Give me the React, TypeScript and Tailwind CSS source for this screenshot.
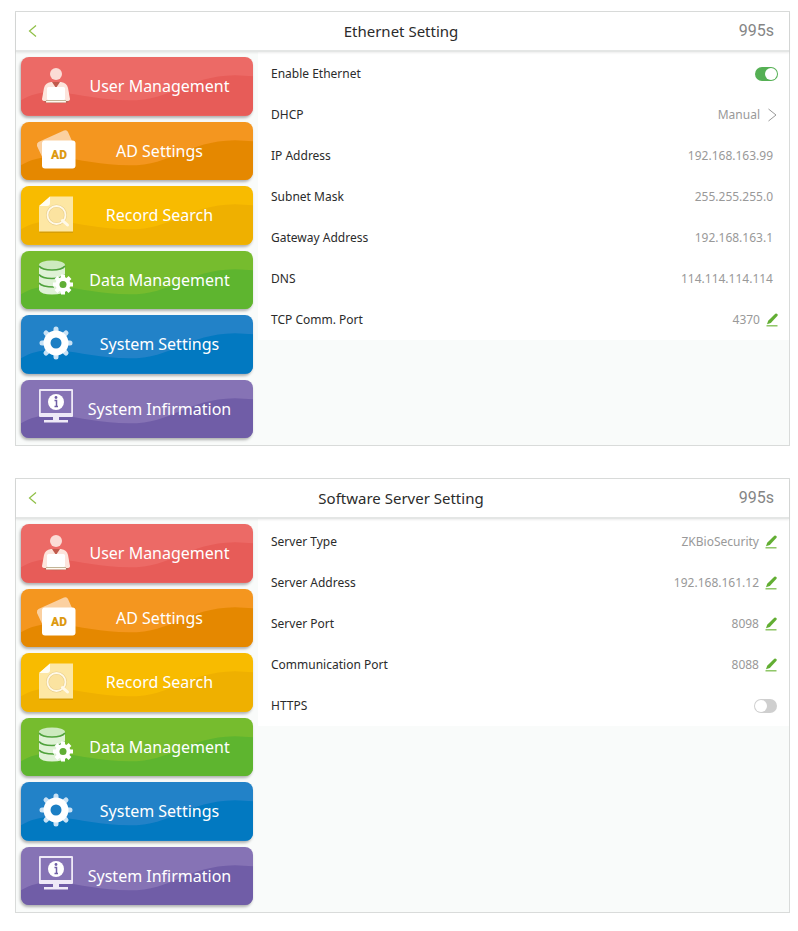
import React, { useState } from "react";

type MenuItem = {
  label: string;
  top: string;
  wave: string;
  icon: React.ReactNode;
};

const UserIcon = () => (
  <svg width="40" height="40" viewBox="0 0 40 40" aria-hidden="true">
    <path d="M7 34 H33 L32 37.500 Q20 39 9 37.500 Z" fill="#a8705a" opacity="0.75" />
    <path d="M6 34 L8 23 Q9 18 15 17 H25 Q31 18 32 23 L34 34 Q34 36 31 36 H9 Q6 36 6 34 Z" fill="#fde4dc" />
    <path d="M16 17 H24 L20 23 Z" fill="#c05a4c" />
    <circle cx="20" cy="9" r="6" fill="#fbdcd6" />
    <rect x="11" y="22" width="18" height="13" rx="1.500" fill="#fff" />
    <path d="M10 35.500 H30" stroke="#a8a17a" strokeWidth="0.700" />
    <rect x="10" y="36" width="20" height="1.500" rx="0.500" fill="#fffaf0" />
  </svg>
);

const AdIcon = () => (
  <svg width="40" height="40" viewBox="0 0 40 40" aria-hidden="true">
    <path d="M2.500 13 L28 1.500 Q31 0.500 32 3 L36 12 L8 32 L1 17 Q0.500 14 2.500 13Z" fill="#fbd0a0" />
    <rect x="6" y="11.500" width="33.500" height="28" rx="3" fill="#fff" />
    <text x="23" y="30" textAnchor="middle" fontSize="12" fontWeight="900" fontFamily="Roboto, sans-serif" fill="#dd9a12">AD</text>
  </svg>
);

const RecordIcon = () => (
  <svg width="40" height="40" viewBox="0 0 40 40" aria-hidden="true">
    <path d="M3.500 38 H37" stroke="#b98a10" strokeWidth="1.500" opacity="0.6" />
    <path d="M14 2.500 H37 V37.500 H3 V12.500 Z" fill="#fde7a4" />
    <path d="M14 2.500 V9 Q14 12 11 12 H3 Z" fill="#fffdf2" />
    <circle cx="20.500" cy="21" r="9" fill="#fbe3a0" stroke="#e9cf8c" strokeWidth="3" />
    <circle cx="20.500" cy="21" r="9" fill="none" stroke="#fff9e8" strokeWidth="1.800" />
    <path d="M26.500 26.500 L31.500 31" stroke="#fff9e8" strokeWidth="3" strokeLinecap="round" />
  </svg>
);

const DataIcon = () => (
  <svg width="40" height="40" viewBox="0 0 40 40" aria-hidden="true">
    <path d="M3 7 V32 Q5 36.500 16 36.500 Q28 36.500 29 32 V7 Z" fill="#dff2d6" />
    <ellipse cx="16" cy="7" rx="13" ry="4.500" fill="#cdeabf" />
    <g fill="none" stroke="#4fa23c" strokeWidth="1.500">
      <path d="M3 8 Q6 12 16 12 Q26 12 29 8" />
      <path d="M3 16.500 Q6 20.500 16 20.500 Q26 20.500 29 16.500" />
      <path d="M3 25 Q6 29 18 29" />
    </g>
    <g stroke="#fff" strokeWidth="4">
      <path d="M27 16.500 V36.500 M17 26.500 H37 M20 19.500 L34 33.500 M34 19.500 L20 33.500" />
    </g>
    <circle cx="27" cy="26.500" r="7.500" fill="#fff" />
    <circle cx="27" cy="26.500" r="3.500" fill="#5fae35" />
  </svg>
);

const GearIcon = () => (
  <svg width="40" height="40" viewBox="0 0 40 40" aria-hidden="true">
    <g stroke="#c9e2f5" strokeWidth="5" strokeLinecap="round">
      <path d="M20 6 V34 M6 20 H34 M10 10 L30 30 M30 10 L10 30" />
    </g>
    <circle cx="20" cy="20" r="12.500" fill="#fff" />
    <circle cx="20" cy="20" r="5.500" fill="#1c7fc4" />
  </svg>
);

const MonitorIcon = () => (
  <svg width="40" height="40" viewBox="0 0 40 40" aria-hidden="true">
    <path fillRule="evenodd" d="M4 2 H36 Q37 2 37 3 V29 Q37 30 36 30 H4 Q3 30 3 29 V3 Q3 2 4 2 Z M4.800 4 V26 H35.200 V4 Z" fill="#eee9f7" />
    <path d="M17 30 H23 V33 H32 V35.500 H8 V33 H17 Z" fill="#eee9f7" />
    <circle cx="20" cy="15" r="8" fill="#fff" />
    <circle cx="20" cy="10.500" r="1.400" fill="#6f5fa6" />
    <path d="M18.500 13.500 H20.500 V19.500 M18.500 19.500 H22" fill="none" stroke="#6f5fa6" strokeWidth="1.500" />
  </svg>
);

const menu: MenuItem[] = [
  { label: "User Management", top: "bg-[#ec6a66]", wave: "#e75c58", icon: <UserIcon /> },
  { label: "AD Settings", top: "bg-[#f4961f]", wave: "#e58800", icon: <AdIcon /> },
  { label: "Record Search", top: "bg-[#f8bb00]", wave: "#efb000", icon: <RecordIcon /> },
  { label: "Data Management", top: "bg-[#76bc2e]", wave: "#5eb52f", icon: <DataIcon /> },
  { label: "System Settings", top: "bg-[#2282c8]", wave: "#0279c1", icon: <GearIcon /> },
  { label: "System Infirmation", top: "bg-[#8673b5]", wave: "#705da7", icon: <MonitorIcon /> },
];

function Sidebar() {
  return (
    <nav aria-label="Main menu" className="grid w-[232px] shrink-0 grid-rows-6 gap-[6px]">
      {menu.map((item) => (
        <button
          key={item.label}
          type="button"
          className={`relative flex items-center overflow-hidden rounded-lg pr-[10px] pl-[15px] text-white shadow-[-1px_2px_3px_rgba(0,0,0,0.3)] ${item.top}`}
        >
          <svg className="absolute inset-0 size-full" viewBox="0 0 232 58" preserveAspectRatio="none" aria-hidden="true">
            <path d="M0 43 C10 37 22 34 36 35 C60 37 80 43 108 43 C152 43 165 19 214 18 L232 19 V58 H0 Z" fill={item.wave} />
          </svg>
          <span className="relative shrink-0 pb-[3px]">{item.icon}</span>
          <span className="relative flex-1 text-center text-base whitespace-nowrap">{item.label}</span>
        </button>
      ))}
    </nav>
  );
}

function Panel({ title, children }: { title: string; children: React.ReactNode }) {
  return (
    <section className="flex min-h-[435px] flex-col border border-[#d9dbda] bg-[#f9fbfa]">
      <header className="relative grid h-10 grid-cols-[1fr_auto_1fr] items-center border-b-2 border-[#e4e6e5] bg-white pr-[15px] pl-3 shadow-[0_1px_2px_rgba(0,0,0,0.08)]">
        <button type="button" aria-label="Back" className="w-fit text-[#8fbf45]">
          <svg width="10" height="14" viewBox="0 0 10 14" fill="none" stroke="currentColor" strokeWidth="1.200" aria-hidden="true">
            <path d="M8 1.500 L1.500 7 L8 12.500" />
          </svg>
        </button>
        <h1 className="text-[15px] text-[#2b2b2b]">{title}</h1>
        <span className="text-right font-[Roboto,sans-serif] text-base text-[#858585]">995s</span>
      </header>
      <div className="flex flex-1">
        <div className="flex px-[5px] pt-[5px] pb-[7px]">
          <Sidebar />
        </div>
        <div className="min-w-0 flex-1">{children}</div>
      </div>
    </section>
  );
}

function Row({ label, htmlFor, children }: { label: string; htmlFor?: string; children: React.ReactNode }) {
  return (
    <div className="flex h-[41px] items-center justify-between text-xs">
      {htmlFor ? (
        <label htmlFor={htmlFor} className="text-[#2b2b2b]">{label}</label>
      ) : (
        <span className="text-[#2b2b2b]">{label}</span>
      )}
      <div className="flex items-center gap-[6px] text-[#999]">{children}</div>
    </div>
  );
}

function Edit({ label }: { label: string }) {
  return (
    <button type="button" aria-label={`Edit ${label}`}>
      <svg width="12" height="14" viewBox="0 0 12 14" aria-hidden="true">
        <path d="M9.300 0.800 Q10.300 0 11.300 0.900 Q12.200 1.900 11.300 2.900 L4.800 10 L1 11.300 L2.200 7.800 Z" fill="#62ae33" />
        <path d="M0.500 12.800 H11.500" stroke="#7dbd4f" strokeWidth="1.300" />
      </svg>
    </button>
  );
}

function Switch({ id, initial }: { id: string; initial: boolean }) {
  const [on, setOn] = useState(initial);
  return (
    <input
      id={id}
      type="checkbox"
      role="switch"
      checked={on}
      onChange={(e) => setOn(e.target.checked)}
      className="flex h-[14px] w-[23px] appearance-none items-center rounded-full bg-[#cfcfcf] p-px before:size-3 before:rounded-full before:bg-white checked:justify-end checked:bg-[#55b054]"
    />
  );
}

const Plain = ({ children }: { children: React.ReactNode }) => <span className="mr-[5px]">{children}</span>;

export default function App() {
  return (
    <main className="flex flex-col gap-8 bg-white pt-[11px] pr-2 pb-[18px] pl-[15px] font-['Noto_Sans','Open_Sans',sans-serif]">
      <Panel title="Ethernet Setting">
        <div className="bg-white pt-px pr-[11px] pl-[13px]">
          <Row label="Enable Ethernet" htmlFor="ethernet">
            <Switch id="ethernet" initial={true} />
          </Row>
          <Row label="DHCP">
            <button type="button" className="flex items-center gap-[6px]">
              Manual
              <svg width="12" height="14" viewBox="0 0 12 14" fill="none" stroke="currentColor" aria-hidden="true">
                <path d="M2.500 1 L10 7 L2.500 13" />
              </svg>
            </button>
          </Row>
          <Row label="IP Address"><Plain>192.168.163.99</Plain></Row>
          <Row label="Subnet Mask"><Plain>255.255.255.0</Plain></Row>
          <Row label="Gateway Address"><Plain>192.168.163.1</Plain></Row>
          <Row label="DNS"><Plain>114.114.114.114</Plain></Row>
          <Row label="TCP Comm. Port">4370<Edit label="TCP Comm. Port" /></Row>
        </div>
      </Panel>
      <Panel title="Software Server Setting">
        <div className="bg-white pt-[2px] pr-3 pl-[13px]">
          <Row label="Server Type">ZKBioSecurity<Edit label="Server Type" /></Row>
          <Row label="Server Address">192.168.161.12<Edit label="Server Address" /></Row>
          <Row label="Server Port">8098<Edit label="Server Port" /></Row>
          <Row label="Communication Port">8088<Edit label="Communication Port" /></Row>
          <Row label="HTTPS" htmlFor="https">
            <Switch id="https" initial={false} />
          </Row>
        </div>
      </Panel>
    </main>
  );
}
